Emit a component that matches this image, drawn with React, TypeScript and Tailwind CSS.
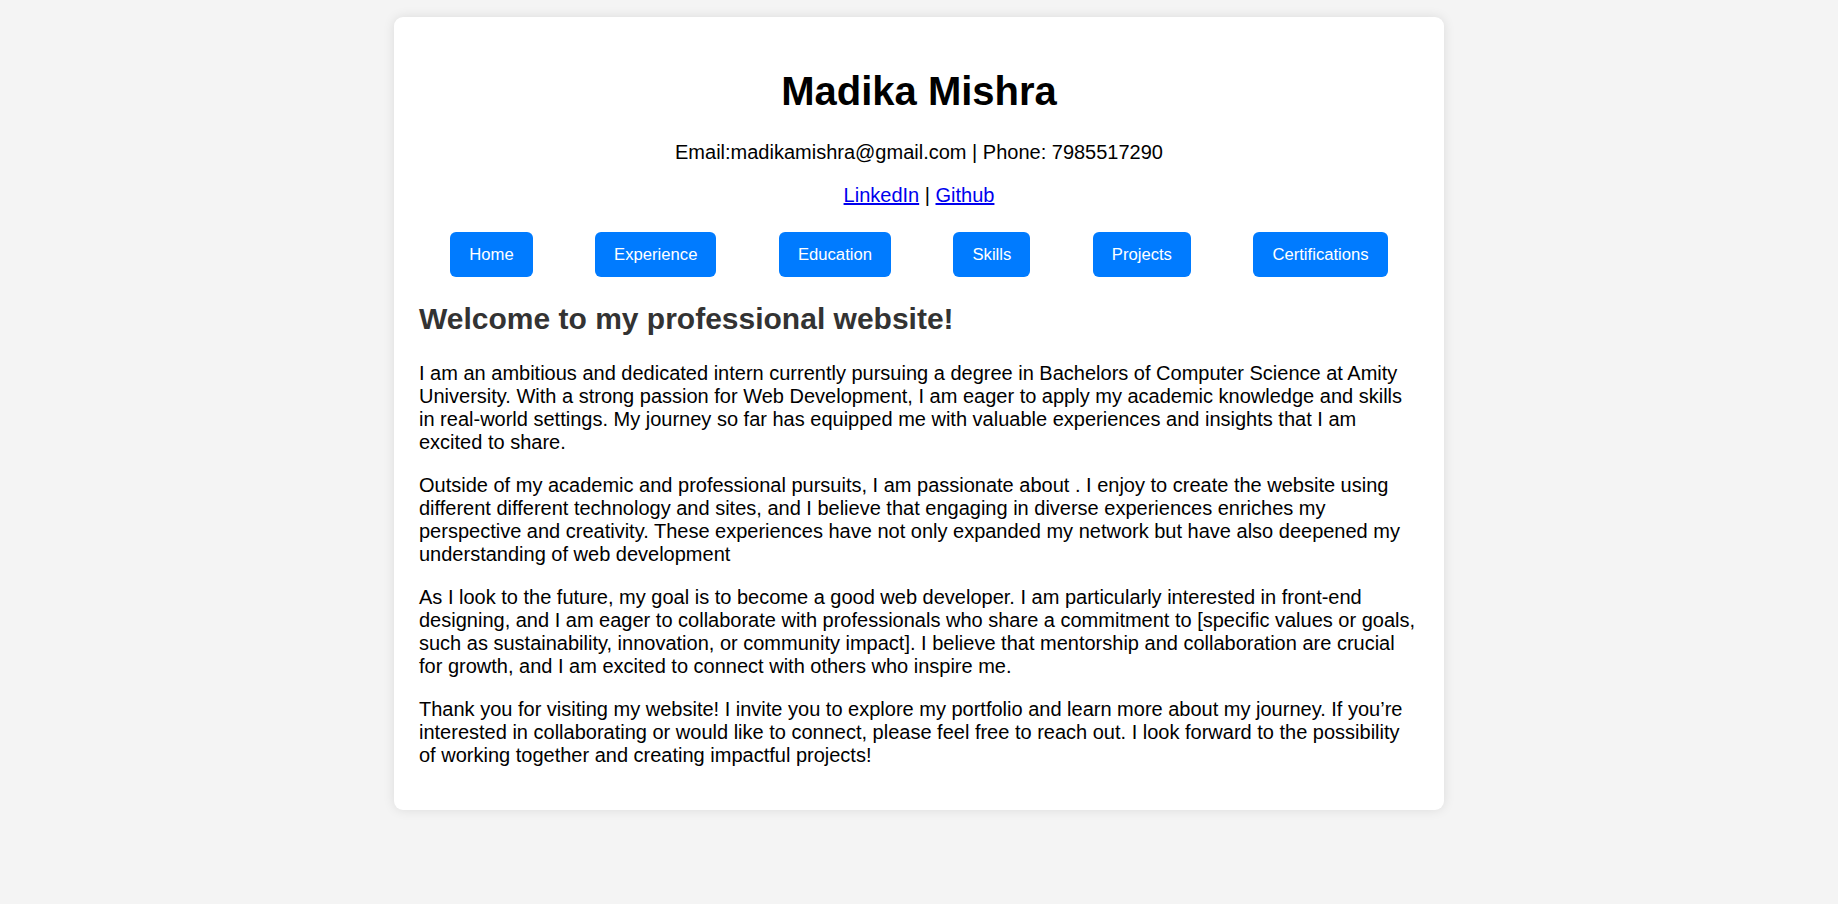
const links = ['Home', 'Experience', 'Education', 'Skills', 'Projects', 'Certifications'];

function App() {
  return (
    <div className="min-h-[904px] bg-[#f4f4f4] pt-[17px] pb-[20px] font-['Liberation_Sans',Arial,sans-serif] text-[20px] leading-[23px] text-black">
      <div className="mx-auto w-[1050px] rounded-[9px] bg-white p-[25px] pb-[23px] shadow-[0_0_12px_rgba(0,0,0,0.1)]">
        <h1 className="mt-[26px] mb-[27px] text-center text-[40px] leading-[46px] font-bold text-black">Madika Mishra</h1>
        <p className="mb-[20px] text-center">Email:madikamishra@gmail.com | Phone: 7985517290</p>
        <p className="text-center">
          <a href="#" className="text-[#0000ee] underline">LinkedIn</a> | <a href="#" className="text-[#0000ee] underline">Github</a>
        </p>
        <nav className="mt-[25px] flex justify-around">
          {links.map((l) => (
            <button
              key={l}
              className="h-[45px] rounded-[6px] bg-[#007bff] px-[19px] text-[16.67px] leading-[19px] text-white"
            >
              {l}
            </button>
          ))}
        </nav>
        <h2 className="mt-[25px] mb-[25px] text-[30px] leading-[34.5px] font-bold text-[#333]">Welcome to my professional website!</h2>
        <p className="mb-[20px]">
          I am an ambitious and dedicated intern currently pursuing a degree in Bachelors of Computer Science at Amity University. With a strong passion for Web Development, I am eager to apply my academic knowledge and skills in real-world settings. My journey so far has equipped me with valuable experiences and insights that I am excited to share.
        </p>
        <p className="mb-[20px]">
          Outside of my academic and professional pursuits, I am passionate about . I enjoy to create the website using different different technology and sites, and I believe that engaging in diverse experiences enriches my perspective and creativity. These experiences have not only expanded my network but have also deepened my understanding of web development
        </p>
        <p className="mb-[20px]">
          As I look to the future, my goal is to become a good web developer. I am particularly interested in front-end designing, and I am eager to collaborate with professionals who share a commitment to [specific values or goals, such as sustainability, innovation, or community impact]. I believe that mentorship and collaboration are crucial for growth, and I am excited to connect with others who inspire me.
        </p>
        <p className="mb-[20px]">
          Thank you for visiting my website! I invite you to explore my portfolio and learn more about my journey. If you’re interested in collaborating or would like to connect, please feel free to reach out. I look forward to the possibility of working together and creating impactful projects!
        </p>
      </div>
    </div>
  );
}

export default App;
